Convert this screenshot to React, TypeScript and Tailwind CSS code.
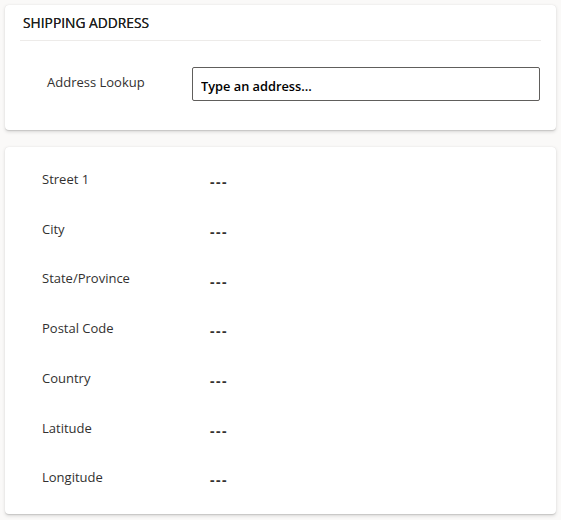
const fields = [
  "Street 1",
  "City",
  "State/Province",
  "Postal Code",
  "Country",
  "Latitude",
  "Longitude",
];

const font = "font-['Segoe_UI','Open_Sans',sans-serif]";

export default function App() {
  return (
    <div className={`min-h-[520px] bg-[#faf9f8] px-[5px] pt-[5px] pb-[5px] text-[#323130] ${font}`}>
      <section className="rounded-[4px] bg-white px-[15px] shadow-[0_1.6px_3.6px_rgba(0,0,0,0.13),0_0.3px_0.9px_rgba(0,0,0,0.11)]">
        <div className="flex h-[36px] items-center border-b border-[#edebe9] pl-[3px] pt-[1px]">
          <h2 className="text-[13.8px] leading-none text-[#201f1e] [text-shadow:0_0_0.4px_#201f1e]">
            SHIPPING ADDRESS
          </h2>
        </div>
        <div className="flex pt-[26px] pb-[29px] pr-[1px]">
          <label className="w-[172px] pl-[27px] pt-[6px] text-[13px] leading-[18px] text-[#323130]">
            Address Lookup
          </label>
          <input
            type="text"
            placeholder="Type an address..."
            className="h-[34px] flex-1 rounded-[2px] border border-[#605e5c] bg-white px-[8px] pt-[3px] text-[12.8px] font-semibold text-black outline-none placeholder:text-black"
          />
        </div>
      </section>

      <section className="mt-[17px] rounded-[4px] bg-white pt-[8px] pb-[11px] shadow-[0_1.6px_3.6px_rgba(0,0,0,0.13),0_0.3px_0.9px_rgba(0,0,0,0.11)]">
        {fields.map((f) => (
          <div key={f} className="flex h-[49.7px] items-center">
            <span className="w-[205px] pl-[37px] text-[13px] text-[#323130]">{f}</span>
            <span className="mt-[4px] text-[14px] font-bold tracking-[1.5px] text-[#323130]">---</span>
          </div>
        ))}
      </section>
    </div>
  );
}
